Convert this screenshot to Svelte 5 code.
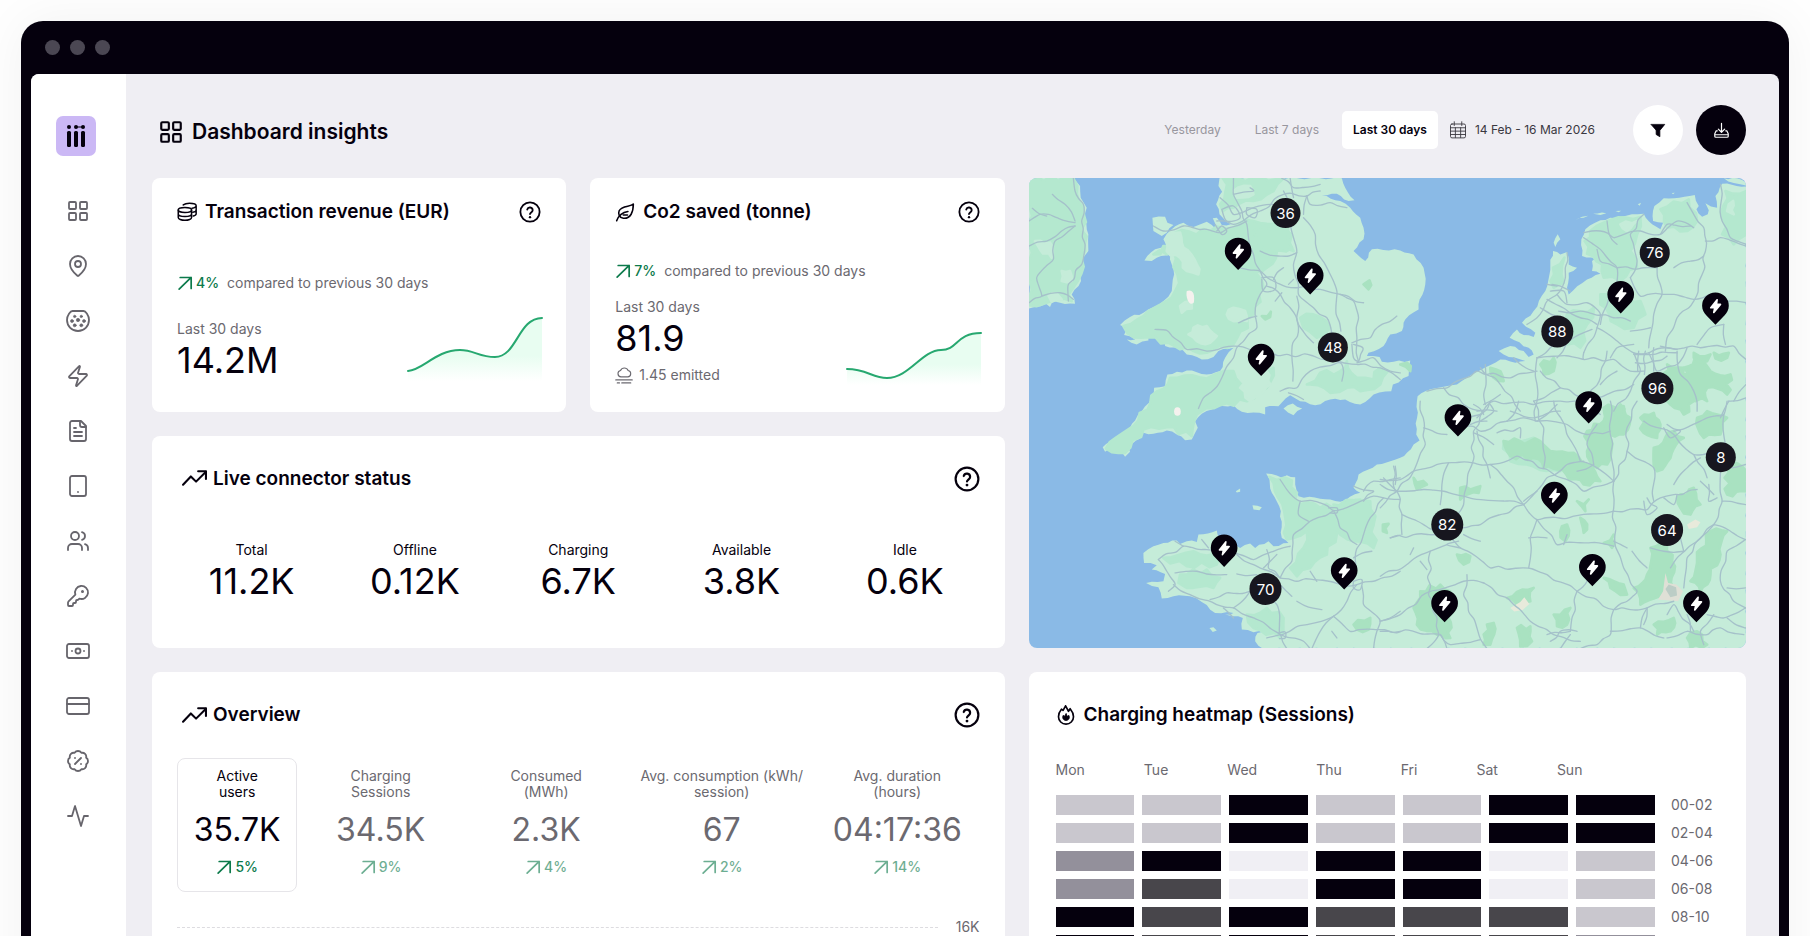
<script lang="ts">
  const nav = [
    { icon: 'grid', label: 'Dashboard' },
    { icon: 'pin', label: 'Locations' },
    { icon: 'connector', label: 'Connectors' },
    { icon: 'zap', label: 'Sessions' },
    { icon: 'file', label: 'Reports' },
    { icon: 'device', label: 'Devices' },
    { icon: 'users', label: 'Users' },
    { icon: 'key', label: 'Access' },
    { icon: 'banknote', label: 'Payouts' },
    { icon: 'card', label: 'Payments' },
    { icon: 'discount', label: 'Discounts' },
    { icon: 'activity', label: 'Activity' }
  ];

  const icons: Record<string, string> = {
    grid: '<rect x="3" y="3" width="7" height="7" rx="1"/><rect x="14" y="3" width="7" height="7" rx="1"/><rect x="14" y="14" width="7" height="7" rx="1"/><rect x="3" y="14" width="7" height="7" rx="1"/>',
    pin: '<path d="M20 10c0 5-5.5 10.200-7.400 11.800a1 1 0 0 1-1.200 0C9.500 20.200 4 15 4 10a8 8 0 0 1 16 0"/><circle cx="12" cy="10" r="3"/>',
    connector:
      '<path d="M6.500 2h11c2 0 5.500 4.500 5.500 9a11 11 0 0 1-22 0C1 6.500 4.500 2 6.500 2z"/><g fill="currentColor" stroke-width="0.600"><circle cx="8.700" cy="7.400" r="1.200"/><circle cx="15.300" cy="7.400" r="1.200"/><circle cx="6" cy="12" r="1.500"/><circle cx="12" cy="11" r="1.700"/><circle cx="18" cy="12" r="1.500"/><circle cx="8.700" cy="16.300" r="1.500"/><circle cx="15.300" cy="16.300" r="1.500"/></g>',
    zap: '<path d="M4 14a1 1 0 0 1-.78-1.63l9.900-10.200a.5.5 0 0 1 .86.46l-1.920 6.020A1 1 0 0 0 13 10h7a1 1 0 0 1 .78 1.630l-9.900 10.200a.5.5 0 0 1-.86-.46l1.920-6.020A1 1 0 0 0 11 14z"/>',
    file: '<path d="M15 2H6a2 2 0 0 0-2 2v16a2 2 0 0 0 2 2h12a2 2 0 0 0 2-2V7z"/><path d="M14 2v4a2 2 0 0 0 2 2h4M10 9H8M16 13H8M16 17H8"/>',
    device: '<rect x="4" y="2" width="16" height="20" rx="2"/><path d="M12 18h.01"/>',
    users:
      '<path d="M16 21v-2a4 4 0 0 0-4-4H6a4 4 0 0 0-4 4v2"/><circle cx="9" cy="7" r="4"/><path d="M22 21v-2a4 4 0 0 0-3-3.870M16 3.130a4 4 0 0 1 0 7.750"/>',
    key: '<path d="M2.600 17.400A2 2 0 0 0 2 18.800V21a1 1 0 0 0 1 1h3a1 1 0 0 0 1-1v-1a1 1 0 0 1 1-1h1a1 1 0 0 0 1-1v-1a1 1 0 0 1 1-1h.17a2 2 0 0 0 1.410-.59l.81-.81a6.500 6.500 0 1 0-4-4z"/><circle cx="16.500" cy="7.500" r=".6" fill="currentColor"/>',
    banknote: '<rect x="1" y="5" width="22" height="14" rx="2"/><circle cx="12" cy="12" r="2.500"/><path d="M6 12h.01M18 12h.01"/>',
    card: '<rect x="1" y="4" width="22" height="16" rx="2"/><path d="M1 10h22"/>',
    discount:
      '<path d="M3.850 8.620a4 4 0 0 1 4.780-4.770 4 4 0 0 1 6.740 0 4 4 0 0 1 4.780 4.780 4 4 0 0 1 0 6.740 4 4 0 0 1-4.770 4.780 4 4 0 0 1-6.750 0 4 4 0 0 1-4.780-4.770 4 4 0 0 1 0-6.760z"/><path d="m15 9-6 6M9 9h.01M15 15h.01"/>',
    activity: '<path d="M22 12h-4l-3 10L9 2 6 12H2"/>',
    trending: '<path d="m1 18 7.500-8 5 5L23 5.500"/><path d="M15.500 5H23v7.500"/>',
    arrow: '<path d="M3 20 20 3.500M4.500 3.500H20V19"/>',
    help: '<circle cx="12" cy="12" r="10.500"/><path d="M9 9.300a3 3 0 0 1 5.900.8c0 2-2.900 2.700-2.900 4.200"/><path d="M12 17.600h.01" stroke-width="2.600"/>',
    coins:
      '<ellipse cx="9.500" cy="9.500" rx="8" ry="3"/><path d="M1.500 9.500v9c0 1.900 3.600 3.500 8 3.500s8-1.600 8-3.500v-9M1.500 14c0 1.900 3.600 3.300 8 3.300s8-1.400 8-3.300"/><path d="M7.500 3.500C9 2.300 12 1.500 15 1.500c4.500 0 8 1.300 8 3s-2 2.600-5 3M23 4.500v9.500c0 1.300-1.600 2.300-3.500 2.800M23 9.500c0 1.300-2 2.400-4 2.800"/>',
    leaf: '<path d="M22 2.500C19 6 8 4 5 10.500c-1.500 3.500 0 8.500 5 9 9 .8 12-8 12-17z"/><path d="M2 22.500C5 15 9 12.500 15.500 11.500M10 15.500h5"/>',
    cloud: '<path d="M8 14.500a4.300 4.300 0 0 1-.6-8.500A5.500 5.500 0 0 1 17.500 6a4.300 4.300 0 0 1-.5 8.500z"/><path d="M1 18.500h22M3 22.500h3M9 22.500h12"/>',
    flame:
      '<path d="M11.500 1 8.500 6.500 6.500 5C4 8 3 11 3 14a9 9 0 0 0 18 0c0-3.500-2-7-4-9.500l-2 3z"/><path d="M12 10.500 10.500 13.500l-2-1c-1.300 3.200.5 6 3.500 6s5-2.800 3.500-6l-2 1z" fill="currentColor" stroke-width="1"/>',
    calendar: '<rect x="2" y="4" width="20" height="18.500" rx="2"/><path d="M2 9h20M2 13.500h20M2 18h20M8.500 9v13M15.500 9v13M7 1v5M17 1v5"/>',
    filter: '<path d="M3 4.500h18l-6.500 8V21L9.500 18v-5.500z" fill="currentColor"/>',
    download: '<path d="M12 2v12M7.500 10l4.500 4.500 4.500-4.500M6 12.500H4.500l-2 4V20a1.500 1.500 0 0 0 1.500 1.500h16a1.500 1.500 0 0 0 1.500-1.500v-3.500l-2-4H18M3 18h18"/>'
  };

  const ranges = ['Yesterday', 'Last 7 days', 'Last 30 days'];
  let range = $state('Last 30 days');

  const connectors = [
    { label: 'Total', value: '11.2K' },
    { label: 'Offline', value: '0.12K' },
    { label: 'Charging', value: '6.7K' },
    { label: 'Available', value: '3.8K' },
    { label: 'Idle', value: '0.6K' }
  ];

  const overview = [
    { lines: ['Active', 'users'], value: '35.7K', change: '5%' },
    { lines: ['Charging', 'Sessions'], value: '34.5K', change: '9%' },
    { lines: ['Consumed', '(MWh)'], value: '2.3K', change: '4%' },
    { lines: ['Avg. consumption (kWh/', 'session)'], value: '67', change: '2%' },
    { lines: ['Avg. duration', '(hours)'], value: '04:17:36', change: '14%' }
  ];
  let metric = $state(0);

  const days = ['Mon', 'Tue', 'Wed', 'Thu', 'Fri', 'Sat', 'Sun'];
  // 0 = quiet, 4 = busiest
  const heat = [
    { slot: '00-02', levels: [1, 1, 4, 1, 1, 4, 4] },
    { slot: '02-04', levels: [1, 1, 4, 1, 1, 4, 4] },
    { slot: '04-06', levels: [2, 4, 0, 4, 4, 0, 1] },
    { slot: '06-08', levels: [2, 3, 0, 4, 4, 0, 1] },
    { slot: '08-10', levels: [4, 3, 4, 3, 3, 3, 1] },
    { slot: '', levels: [4, 3, 4, 3, 3, 3, 2] }
  ];

  const clusters = [
    { x: 796, y: 126, r: 45, n: 36 },
    { x: 938, y: 529, r: 45, n: 48 },
    { x: 1903, y: 245, r: 45, n: 76 },
    { x: 1611, y: 481, r: 48, n: 88 },
    { x: 1911, y: 651, r: 48, n: 96 },
    { x: 2101, y: 858, r: 45, n: 8 },
    { x: 1281, y: 1060, r: 48, n: 82 },
    { x: 1940, y: 1076, r: 48, n: 64 },
    { x: 736, y: 1253, r: 48, n: 70 }
  ];

  const stations = [
    [654, 240], [870, 313], [723, 558], [1801, 370], [2085, 404], [1705, 700], [1313, 739],
    [1602, 972], [1716, 1188], [1273, 1296], [2028, 1296], [612, 1130], [972, 1198]
  ];

  const land = [
    // Ireland
    '27,22 160,22 180,45 182,80 200,110 195,145 205,190 205,240 185,270 183,330 155,370 165,398 120,395 98,390 90,408 78,398 27,412',
    // Great Britain
    '598,22 595,45 606,62 588,100 598,130 632,160 605,162 590,140 578,142 588,175 560,152 520,168 490,155 455,175 430,205 440,225 405,235 373,268 395,270 410,260 450,250 455,280 462,310 455,360 430,390 370,425 330,438 300,462 325,470 312,492 345,505 320,505 350,520 385,508 385,495 400,488 420,495 435,490 435,525 475,530 500,550 545,565 580,558 595,540 640,530 615,560 600,600 560,610 500,598 442,610 435,645 402,650 395,680 365,720 345,748 330,770 300,800 270,812 248,828 255,842 285,828 302,838 315,857 330,842 325,828 360,802 370,785 400,788 440,778 470,790 495,807 515,805 533,770 525,750 545,728 590,705 640,702 665,722 735,730 735,708 775,705 810,672 840,690 885,702 930,685 975,685 1020,700 1060,670 1113,660 1118,640 1165,615 1170,568 1120,572 1085,572 1078,558 1040,555 1045,545 1090,525 1110,490 1145,480 1150,455 1155,445 1195,415 1198,385 1215,340 1210,290 1180,250 1140,238 1055,235 1035,270 1000,240 1030,205 1030,170 1020,140 990,110 960,90 905,72 950,68 985,90 1003,88 975,50 965,22',
    // Anglesey
    '397,140 435,137 442,155 460,162 440,185 425,195 400,180',
    // Isle of Wight
    '790,712 818,697 846,712 820,732',
    '697,1002 725,1008 718,1017 700,1015',
    '647,960 660,952 660,962 650,964',
    '568,1370 580,1368 590,1378 578,1382',
    // Wadden islands
    '1600,215 1612,190 1620,205 1605,228',
    '1664,148 1685,137 1704,134 1690,140',
    '1718,128 1758,127 1740,132',
    '1785,120 1802,119 1795,124',
    '1852,100 1862,95 1858,104',
    '1954,66 1963,65 1958,70',
    '2110,22 2150,22 2178,36 2178,44 2140,36',
    // continent
    '728,1432 705,1410 712,1385 735,1380 700,1383 665,1375 668,1340 640,1335 615,1330 640,1325 585,1325 545,1292 510,1275 460,1275 425,1282 415,1248 378,1235 430,1230 435,1208 395,1195 410,1182 372,1175 370,1145 400,1125 430,1115 470,1108 480,1118 500,1110 530,1112 535,1090 590,1078 600,1100 625,1110 660,1130 690,1117 705,1130 745,1110 760,1125 805,1115 785,1100 782,1020 755,965 748,925 738,907 785,920 800,912 825,918 825,940 835,975 900,983 960,992 1020,965 1000,950 1015,910 1070,880 1140,860 1160,845 1180,820 1198,808 1188,790 1192,675 1215,660 1310,640 1440,565 1485,575 1515,570 1450,550 1435,540 1470,525 1510,540 1525,558 1540,550 1525,530 1468,500 1490,475 1510,492 1540,498 1545,485 1505,455 1540,420 1575,360 1590,280 1598,240 1620,250 1640,243 1645,280 1670,290 1645,305 1640,350 1645,370 1700,325 1740,308 1715,300 1715,270 1725,262 1685,255 1683,205 1695,175 1740,148 1800,138 1870,128 1895,160 1920,175 1928,155 1898,150 1902,105 1930,82 2023,72 2035,105 2028,115 2045,137 2062,130 2065,118 2055,97 2090,110 2085,75 2105,38 2178,46 2178,1432'
  ];

  // upland tint
  const hills = [
    '27,22 160,22 172,45 190,110 195,240 173,330 145,370 155,390 27,402',
    '608,22 790,22 760,60 700,90 640,110 608,120 600,100 616,62',
    '570,180 700,150 780,150 815,190 820,240 770,240 740,290 700,300 730,350 700,430 640,520 560,545 520,540 445,515 385,498 322,486 310,465 370,435 465,360 472,310 460,240 400,250 450,225 465,185',
    '450,620 560,622 610,600 640,600 680,650 760,590 740,650 680,690 560,710 530,730 515,795 440,768 370,775 315,845 258,832 355,748 412,660',
    '700,180 800,160 815,230 760,240 720,225',
    '840,440 880,430 930,470 890,500 850,470',
    '860,640 900,605 960,600 980,570 1010,620 1060,625 1080,590 1103,600 1080,640 1020,660 980,650 930,665 870,640',
    '748,917 815,928 825,985 900,1010 960,1000 1020,985 1060,1060 1060,1130 1000,1110 960,1070 920,1150 870,1190 830,1215 810,1190 850,1130 860,1080 800,1105 792,1020',
    '940,1000 1050,990 1060,1060 1000,1110 960,1090',
    '430,1160 520,1140 600,1150 590,1180 500,1185',
    '480,1210 560,1195 600,1220 580,1250 500,1250 475,1235',
    '680,1330 740,1310 790,1340 780,1400 700,1370',
    '1693,210 1710,180 1750,155 1860,138 1850,190 1830,240 1850,290 1800,330 1750,320 1745,280 1700,248',
    '1920,115 2005,85 2030,150 2000,180 1940,170',
    '2115,60 2178,60 2178,190 2140,220 2105,190',
    '1740,370 1860,390 1875,430 1840,470 1790,460 1740,400',
    '1598,290 1632,260 1630,335 1600,350',
    '1640,430 1720,410 1700,460 1680,530 1640,520',
    '1450,810 1540,800 1560,850 1640,870 1620,900 1520,880 1470,870'
  ];

  // lighter patches lying on the uplands
  const clearings = [
    '440,200 480,185 490,230 530,280 535,310 500,300 480,260 440,240',
    '520,470 560,465 590,495 570,515 530,510 505,490',
    '620,430 640,410 675,420 680,450 640,450',
    '660,650 690,610 740,600 750,640 690,690',
    '125,300 150,300 155,330 125,330',
    '45,210 90,215 95,260 60,235',
    '86,375 110,368 125,385 95,392',
    '640,60 690,45 700,70 650,80',
    '480,405 515,390 515,412 485,425',
    '1800,160 1850,150 1820,180',
    '2125,100 2138,90 2140,130 2120,120'
  ];

  const forests = [
    '1450,810 1560,810 1590,840 1660,845 1700,880 1740,930 1690,940 1610,895 1570,890 1540,860 1470,855',
    '1700,780 1750,750 1770,800 1760,880 1730,890 1700,840',
    '1750,710 1810,705 1830,740 1810,790 1770,790 1750,750',
    '1860,740 1900,725 1920,760 1910,800 1870,785',
    '1900,830 1960,780 1990,800 1950,860 1910,900',
    '1990,590 2040,560 2070,600 2130,610 2120,670 2060,650 2060,690 2010,680',
    '1940,580 1990,590 2020,690 1990,730 1950,700 1930,640',
    '2020,545 2070,550 2060,570 2020,560',
    '2080,545 2125,545 2120,560 2085,562',
    '1560,580 1600,560 1600,600 1570,610',
    '2060,720 2120,740 2100,790 2050,800 2030,740',
    '2120,870 2178,900 2178,960 2120,970',
    '1970,980 2020,950 2040,1000 2010,1030 1980,1010',
    '1890,1130 1940,1120 1955,1170 1960,1250 1930,1280 1860,1300 1840,1250 1880,1210',
    '2070,1080 2120,1080 2100,1150 2070,1210 2040,1260 2010,1230 2030,1160',
    '1200,1260 1260,1240 1290,1260 1290,1400 1250,1390 1190,1360 1180,1310',
    '1490,1370 1530,1365 1535,1410 1500,1425',
    '1400,1360 1420,1355 1410,1420 1390,1420',
    '1460,1280 1540,1250 1530,1290 1490,1310',
    '1600,1330 1650,1310 1640,1360 1610,1365',
    '1750,1220 1810,1240 1820,1270 1770,1250',
    '1320,950 1380,945 1375,965 1320,985',
    '1180,920 1220,940 1190,955',
    '1310,1150 1350,1155 1330,1180',
    '1088,1060 1105,1058 1100,1085 1088,1080',
    '1000,1360 1050,1340 1045,1375 1010,1375',
    '1670,990 1690,1000 1705,985 1695,1020',
    '1620,1080 1640,1060 1635,1110',
    '1680,1040 1700,1075 1690,1085',
    '1750,1115 1780,1090 1775,1130',
    '1900,1360 1960,1340 1950,1380 1910,1390',
    '2000,1400 2030,1380 2060,1420 2010,1430',
    '1140,580 1160,575 1170,600',
    '1770,720 1800,700 1810,730 1790,750',
    '1410,590 1440,600 1450,630 1420,620',
    '1030,340 1048,328 1045,355',
    '725,435 752,422 735,445'
  ];

  const roads = [
    {
      dx: 0,
      dy: 0,
      lines: [
        '160,22 165,60 190,100 185,150 195,220 185,280 145,340 145,390', '97,70 135,100 165,150', '27,150 60,130 110,140 165,155',
        '37,112 80,135', '27,225 80,210 125,180 165,165', '165,165 105,210 100,265 50,320 65,375 27,395', '65,375 120,365 160,385',
        '640,22 640,70 665,120 680,160 685,200 700,250 720,300 740,340 720,370 705,430 710,470 650,530 640,560 605,620 570,665 550,680 535,712',
        '590,150 640,160 720,120 790,70 860,75 900,60', '600,80 640,130 700,110 760,100',
        '790,60 815,140 820,200 830,240 820,280 835,370 880,410 920,440 935,490', '850,140 885,190 895,250 925,300 950,360 948,430 962,480',
        '830,375 835,470 815,540 818,630', '655,290 720,300 770,335 830,350 900,355 960,370 1000,390 1015,440 1010,500 1015,570',
        '740,345 780,370 810,410 835,460 880,515', '720,240 780,255 830,245', '790,290 760,325', '785,365 765,390',
        '405,475 440,478 500,535 560,540 640,525 720,545 800,550 880,555 950,570 1010,580 1080,590 1140,625',
        '400,165 430,180 490,165 560,175 600,185 680,150', '860,75 870,100 930,95 980,110', '995,515 1050,500 1085,460 1130,435',
        '780,660 830,650 870,600 960,575 970,600 965,630', '1010,575 1060,560 1110,600 1140,605', '655,455 690,440 710,435',
        '805,665 850,685', '960,370 1030,395', '1000,520 1028,530 1015,570 1000,560 995,520', '725,320 760,320 765,355 730,360 725,325',
        '605,115 640,105 660,140 620,150 605,115', '680,110 710,115 705,140 680,130 680,110', '590,180 605,165 620,180 605,190 585,160',
        '640,70 700,60 690,50', '785,22 820,50 900,40', '810,22 820,80', '860,75 850,130', '805,340 820,325'
      ]
    },
    {
      dx: 1140,
      dy: 0,
      lines: [
        '500,245 495,290 485,350 470,370 440,390 410,440 380,460', '470,345 440,340', '470,370 500,400 560,395 600,430 590,470 550,545',
        '550,185 600,180 640,200 720,180 780,190 830,150 880,170', '730,130 690,190 710,270 690,320', '550,200 600,235 650,290 650,330 620,400 600,460',
        '690,320 720,375 790,370 880,385 930,370 980,390 1037,395', '650,290 730,290 770,290', '770,290 785,370 760,430 745,530',
        '820,290 870,270 910,255', '860,95 880,130 910,170 915,240 905,310 880,390 830,440 800,500 795,540', '960,40 965,150 990,200 1037,220',
        '915,210 960,200 1037,225', '590,470 650,510 700,545 745,545 800,530 900,530 1000,525 1037,565', '475,420 540,420 640,440 690,450',
        '550,545 550,565 640,565 690,600 730,600', '410,560 470,555 550,565', '80,660 140,650 230,600 330,620 410,600', '130,650 190,700 250,720',
        '255,580 255,700', '410,560 410,640 405,750', '420,600 480,650 550,680 620,670 700,640', '240,590 300,640 360,720',
        '230,740 280,690 400,700 480,690 550,690 600,730', '700,545 720,600 690,660 640,720', '745,545 770,600 830,580 860,530',
        '830,540 840,610 880,660 890,720', '970,460 975,520', '970,460 930,470 890,520', '985,690 1037,680', '985,690 960,740',
        '500,480 450,530 410,560', '620,540 600,620 560,680', '575,475 520,500 470,560', '650,290 600,270 590,235', '620,150 625,185 650,220',
        '700,550 760,550 830,545', '705,575 760,570 800,555', '715,540 712,600', '735,540 732,610', '760,530 760,600', '780,525 800,530 830,535',
        '450,360 490,360 500,395', '455,340 480,345 510,360', '440,385 540,440 590,460', '420,410 480,440', '330,720 400,740 480,720',
        '250,700 300,670', '230,720 290,720', '250,730 220,700', '400,600 340,560', '480,650 400,690', '670,360 640,340', '780,190 800,160 870,165',
        '630,560 650,530 700,520', '690,480 750,470', '600,640 650,600', '1000,690 1037,640'
      ]
    },
    {
      dx: 0,
      dy: 720,
      lines: [
        '780,205 800,235 840,270 900,275 940,298 1000,280 1060,255 1100,262 1140,265', '1090,260 1050,320 1030,370 1005,440 1000,500',
        '940,298 960,350 1010,400', '940,298 870,330 820,370 815,450 780,500', '840,270 835,310 865,330', '415,445 490,405 560,415 640,425 700,445 810,405',
        '490,405 465,390', '650,430 700,460 780,500', '740,415 745,470 780,500 830,510 880,505 960,520 1010,520 1060,510 1140,480',
        '415,445 440,480 465,520 445,540', '465,485 530,480 620,490', '650,488 710,490', '460,520 510,550 570,570 640,590 700,620 780,670 800,712',
        '570,565 620,545 690,540', '690,540 640,590', '700,540 770,580 780,670 860,640 940,615 980,570 1010,520',
        '1025,525 1030,580 1080,630 1070,660 1060,712', '940,615 990,660 1070,655 1140,660', '1080,630 1140,600', '780,670 740,680',
        '780,670 850,690 870,712', '830,570 905,595', '940,615 900,660 875,712', '1030,240 1060,210 1140,200', '1120,165 1125,240',
        '1055,420 1000,440', '1000,510 1025,505 1020,535 1000,530 1000,510', '925,290 950,290 950,305 930,305', '1000,225 1060,240 1030,270',
        '1110,380 1140,372', '545,385 565,410', '730,470 770,430', '780,520 815,555', '610,590 640,620', '1090,200 1130,240', '870,480 890,510',
        '935,660 950,680', '775,665 795,662 795,680 778,682'
      ]
    },
    {
      dx: 1080,
      dy: 690,
      lines: [
        '0,235 60,235 100,210 200,185 330,190 410,165 500,205 560,235 610,270 700,240', '120,0 135,130 100,210 50,270 0,320',
        '50,270 130,265 250,285 400,300 430,310', '50,270 65,340 65,400', '205,185 185,250 180,310', '330,0 280,90 275,190 260,250 250,310 220,350',
        '230,380 300,370 360,340 430,310 500,230 560,190 610,180', '430,310 470,355 580,345 700,330', '330,190 380,240 430,310',
        '290,90 320,190 330,230', '470,355 450,410 445,500', '470,355 530,430 620,425 700,435', '200,400 240,440 330,500 430,500 500,520 590,570 700,625 800,620 880,600',
        '0,525 80,490 150,450 200,430', '65,340 130,370 170,390', '0,660 60,640 150,570 250,540 310,545', '260,520 250,580 290,680 320,742',
        '150,450 145,580 170,650 175,700 140,742', '310,545 400,610 450,660 520,700 600,720', '590,570 575,650 570,690', '570,690 500,700',
        '0,690 100,690 180,700 210,730 300,715', '700,240 700,320 705,435 730,500 770,570 740,600 700,625', '460,0 490,80 490,200',
        '470,60 560,70 620,100 690,90', '520,0 560,100 600,180', '690,0 690,100 700,240', '770,0 740,80 740,150 700,240',
        '650,70 620,130 640,190', '700,330 800,325 840,290 880,280 950,265', '740,150 820,200 820,300', '790,60 880,100 940,160 1020,160',
        '1020,215 1025,300 1000,370 960,410 920,470 910,560', '1000,370 950,420 890,470 870,500', '1000,370 1050,390 1095,415', '1025,300 1095,310',
        '880,90 960,60 1030,40 1040,0', '1030,40 1035,130', '1095,415 1040,450 1020,540 1060,600 1095,620', '700,625 690,700 650,730 600,742',
        '690,690 780,680 850,710', '800,620 790,670', '860,710 920,690 980,700 1020,680 1090,700', '920,640 930,690', '1095,620 1030,650 980,640',
        '130,80 200,100', '230,60 300,90 380,60', '280,95 340,130', '45,195 45,250', '0,250 50,270', '30,410 100,400 170,400', '250,400 300,420',
        '235,420 200,430 240,440', '430,300 470,270', '445,410 500,410', '550,430 560,400', '700,420 740,440', '640,500 620,540 590,570',
        '755,450 800,500', '810,440 850,450 910,450', '900,410 910,450', '1000,640 960,690 970,730', '860,640 880,610 940,690', '1040,560 1095,560',
        '985,250 985,300 1010,290', '960,240 1000,280', '800,290 830,320 800,340 790,300', '850,290 880,310 890,280', '860,70 900,90 870,110 850,80',
        '510,720 540,690 590,690', '540,742 570,700', '100,440 90,460', '120,480 140,505', '180,700 200,742', '530,10 500,40 470,60', '380,60 430,50 470,60',
        '300,60 340,30 330,10', '300,40 260,50 230,60', '270,70 320,60', '600,180 650,200 700,240', '640,190 590,210', '960,170 920,200 880,250',
        '940,160 980,230', '1030,200 1095,190', '780,680 800,620', '1040,650 1095,680', '350,95 420,80 420,110', '415,0 400,40 380,60'
      ]
    }
  ];

  // Breaks long straight runs into short uneven ones. `amount` is the largest sideways step,
  // always the same for the same coordinates.
  function roughen(points: string, amount: number, step: number, closed = false) {
    const pts = points.split(' ').map((p) => p.split(',').map(Number));
    if (closed) pts.push(pts[0]);
    const out: number[][] = [];
    for (let i = 0; i < pts.length - 1; i++) {
      const [x1, y1] = pts[i];
      const [x2, y2] = pts[i + 1];
      const length = Math.hypot(x2 - x1, y2 - y1);
      const parts = Math.max(1, Math.round(length / step));
      out.push([x1, y1]);
      for (let k = 1; k < parts; k++) {
        const t = k / parts;
        const x = x1 + (x2 - x1) * t;
        const y = y1 + (y2 - y1) * t;
        const side = Math.sin(x * 12.9 + y * 78.2) * amount;
        out.push([x - ((y2 - y1) / length) * side, y + ((x2 - x1) / length) * side]);
      }
    }
    out.push(pts[pts.length - 1]);
    return out;
  }

  function outline(points: string, amount: number, step: number) {
    return 'M' + roughen(points, amount, step, true).map(([x, y]) => `${x.toFixed(1)} ${y.toFixed(1)}`).join('L') + 'Z';
  }

  function curve(points: string) {
    const p = roughen(points, 5, 28);
    let d = `M${p[0][0]} ${p[0][1]}`;
    for (let i = 0; i < p.length - 1; i++) {
      const a = p[i - 1] ?? p[i];
      const b = p[i];
      const c = p[i + 1];
      const e = p[i + 2] ?? c;
      const n = [b[0] + (c[0] - a[0]) / 6, b[1] + (c[1] - a[1]) / 6, c[0] - (e[0] - b[0]) / 6, c[1] - (e[1] - b[1]) / 6, c[0], c[1]];
      d += 'C' + n.map((v) => v.toFixed(1)).join(' ');
    }
    return d;
  }
</script>

{#snippet icon(name: string, size: number, weight: number)}
  <svg
    class="icon"
    width={size}
    height={size}
    viewBox="0 0 24 24"
    fill="none"
    stroke="currentColor"
    stroke-width={weight}
    stroke-linecap="round"
    stroke-linejoin="round"
    aria-hidden="true"
  >
    {@html icons[name]}
  </svg>
{/snippet}

{#snippet trend(value: string)}
  <span class="trend">{@render icon('arrow', 17, 2.4)}{value}</span>
{/snippet}

<div class="stage">
  <div class="frame">
    <div class="titlebar"><i></i><i></i><i></i></div>

    <div class="screen">
      <aside class="sidebar">
        <a class="logo" href="#home" aria-label="Home">
          <svg width="20" height="24" viewBox="0 0 20 24" aria-hidden="true">
            <g fill="#05000d">
              <circle cx="3" cy="3" r="2" />
              <circle cx="10" cy="3" r="2" />
              <circle cx="17" cy="3" r="2" />
              <rect x="1" y="7" width="4" height="16" rx="1.500" />
              <rect x="8" y="7" width="4" height="16" rx="1.500" />
              <rect x="15" y="7" width="4" height="16" rx="1.500" />
              <rect x="10" y="2.500" width="7" height="1" />
            </g>
          </svg>
        </a>
        <nav>
          {#each nav as item}
            <a href="#{item.icon}" aria-label={item.label}>{@render icon(item.icon, 24, 1.8)}</a>
          {/each}
        </nav>
      </aside>

      <main>
        <header class="topbar">
          <h1>{@render icon('grid', 26, 2)}Dashboard insights</h1>
          <div class="ranges">
            {#each ranges as r}
              <button class:active={range === r} onclick={() => (range = r)}>{r}</button>
            {/each}
          </div>
          <button class="dates">{@render icon('calendar', 18, 1.2)}14 Feb - 16 Mar 2026</button>
          <button class="round" aria-label="Filter">{@render icon('filter', 18, 1)}</button>
          <button class="round dark" aria-label="Download">{@render icon('download', 17, 1.7)}</button>
        </header>

        <div class="cards">
          <section class="card kpi">
            <div class="card-head">
              <h2>{@render icon('coins', 20, 1.8)}Transaction revenue (EUR)</h2>
              <button class="help" aria-label="About transaction revenue">{@render icon('help', 22, 2)}</button>
            </div>
            <p class="compare">{@render trend('4%')}<span>compared to previous 30 days</span></p>
            <div class="figures">
              <div>
                <p class="muted">Last 30 days</p>
                <p class="value">14.2M</p>
              </div>
              <svg class="spark" width="136" height="65" viewBox="0 0 136 65" aria-hidden="true">
                <defs>
                  <linearGradient id="fade" x1="0" y1="0" x2="0" y2="1">
                    <stop offset="0.600" stop-color="#e8fdf1" />
                    <stop offset="1" stop-color="#ffffff" />
                  </linearGradient>
                </defs>
                <path d="M1 55C16 54 29 34 53 34C67 34 72 41 88 41C110 41 111 2 135 2V65H1Z" fill="url(#fade)" />
                <path class="line" d="M1 55C16 54 29 34 53 34C67 34 72 41 88 41C110 41 111 2 135 2" />
              </svg>
            </div>
          </section>

          <section class="card kpi tight">
            <div class="card-head">
              <h2>{@render icon('leaf', 20, 1.9)}Co2 saved (tonne)</h2>
              <button class="help" aria-label="About CO2 saved">{@render icon('help', 22, 2)}</button>
            </div>
            <p class="compare">{@render trend('7%')}<span>compared to previous 30 days</span></p>
            <div class="figures">
              <div>
                <p class="muted">Last 30 days</p>
                <p class="value">81.9</p>
                <p class="muted emitted">{@render icon('cloud', 18, 1.5)}1.45 emitted</p>
              </div>
              <svg class="spark" width="136" height="54" viewBox="0 0 136 54" aria-hidden="true">
                <path d="M1 38C21 38 26 47 41 47C63 47 76 19 95 19C112 19 110 2 135 2V54H1Z" fill="url(#fade)" />
                <path class="line" d="M1 38C21 38 26 47 41 47C63 47 76 19 95 19C112 19 110 2 135 2" />
              </svg>
            </div>
          </section>

          <section class="map" aria-label="Charging locations">
            <svg viewBox="27 21 2151 1410" preserveAspectRatio="xMidYMid slice">
              <rect x="27" y="21" width="2151" height="1410" fill="#8abae6" />
              {#each land as points}
                <path d={outline(points, 3, 16)} fill="#c5ecd9" />
              {/each}
              {#each hills as points}
                <path class="patch" d={outline(points, 9, 22)} fill="#b4e8cf" stroke="#b4e8cf" />
              {/each}
              {#each clearings as points}
                <path class="patch" d={outline(points, 6, 16)} fill="#c5ecd9" stroke="#c5ecd9" />
              {/each}
              {#each forests as points}
                <path class="patch" d={outline(points, 8, 16)} fill="#a9e2c1" stroke="#a9e2c1" />
              {/each}
              <g fill="#f5f1ee">
                <path d="M500 360c14-6 22 4 22 20s0 16-8 18-18-20-14-38z" />
                <ellipse cx="472" cy="721" rx="10" ry="13" />
                <path d="M2000 1060l25-15 15 8-10 15-25 5z" fill="#e8eadb" />
                <path d="M1935 1205l8 30 25 5 20 20-15 30-60-5 15-25z" fill="#dfe0d6" />
                <path d="M1945 1240l22 8 3 25-20 5-15-25z" fill="#bccdc6" />
                <path d="M1470 1310l30-18 12-14 15 20-20 18-25 5z" fill="#e8eadb" />
              </g>
              {#each roads as region}
                <g class="roads" transform="translate({region.dx} {region.dy})">
                  {#each region.lines as points}
                    <path d={curve(points)} />
                  {/each}
                </g>
              {/each}
              {#each clusters as c}
                <g transform="translate({c.x} {c.y})">
                  <circle r={c.r} fill="#17161f" />
                  <text class="count" text-anchor="middle" y="17">{c.n}</text>
                </g>
              {/each}
              {#each stations as [x, y]}
                <g transform="translate({x} {y})">
                  <path d="M-40 0a40 40 0 1 1 80 0c0 13-6 22-13 29L0 57-27 29c-7-7-13-16-13-29z" fill="#05000d" />
                  <path
                    d="M5-18L-14 6H-2L-5 20L15-4H3z"
                    fill="#fff"
                    stroke="#fff"
                    stroke-width="5"
                    stroke-linejoin="round"
                  />
                </g>
              {/each}
            </svg>
          </section>

          <section class="card wide live">
            <div class="card-head">
              <h2>{@render icon('trending', 25, 2)}Live connector status</h2>
              <button class="help" aria-label="About connector status">{@render icon('help', 26, 2)}</button>
            </div>
            <dl>
              {#each connectors as c}
                <div>
                  <dt>{c.label}</dt>
                  <dd class="value">{c.value}</dd>
                </div>
              {/each}
            </dl>
          </section>

          <section class="card wide">
            <div class="card-head">
              <h2>{@render icon('trending', 25, 2)}Overview</h2>
              <button class="help" aria-label="About the overview">{@render icon('help', 26, 2)}</button>
            </div>
            <div class="metrics">
              {#each overview as m, i}
                <button class="metric" class:selected={metric === i} aria-pressed={metric === i} onclick={() => (metric = i)}>
                  <span class="name">{m.lines[0]}<br />{m.lines[1]}</span>
                  <span class="number">{m.value}</span>
                  {@render trend(m.change)}
                </button>
              {/each}
            </div>
            <div class="axis"><i></i><span>16K</span></div>
          </section>

          <section class="card heatmap">
            <div class="card-head">
              <h2>{@render icon('flame', 20, 2)}Charging heatmap (Sessions)</h2>
            </div>
            <table>
              <thead>
                <tr>
                  {#each days as day}
                    <th scope="col">{day}</th>
                  {/each}
                </tr>
              </thead>
              <tbody>
                {#each heat as row}
                  <tr>
                    {#each row.levels as level}
                      <td class="level-{level}"></td>
                    {/each}
                    <th scope="row">{row.slot}</th>
                  </tr>
                {/each}
              </tbody>
            </table>
          </section>
        </div>
      </main>
    </div>
  </div>
</div>

<style>
  :global(body) {
    margin: 0;
    background: #fefefe;
  }

  .stage {
    --ink: #05000d;
    --muted: #6b6970;
    --green: #0c7a4b;
    --ground: #efeef3;
    box-sizing: border-box;
    height: 100vh;
    overflow: hidden;
    padding: 21px 21px 0;
    font-family: Inter, 'Liberation Sans', sans-serif;
    font-size: 14px;
    line-height: 20px;
    color: var(--ink);
  }

  .stage :global(*) {
    box-sizing: border-box;
  }

  h1,
  h2,
  p,
  dl,
  dd {
    margin: 0;
  }

  button {
    border: 0;
    padding: 0;
    background: none;
    font: inherit;
    color: inherit;
    cursor: pointer;
  }

  .icon {
    flex: none;
    display: block;
  }

  .frame {
    min-height: 100%;
    padding: 0 10px;
    border-radius: 22px 22px 0 0;
    background: var(--ink);
    box-shadow: 0 0 50px rgba(0, 0, 0, 0.05);
  }

  .titlebar {
    display: flex;
    gap: 10px;
    height: 53px;
    padding: 19px 14px 0;
  }

  .titlebar i {
    width: 15px;
    height: 15px;
    border-radius: 50%;
    background: #4b4753;
  }

  .screen {
    display: flex;
    border-radius: 8px 8px 0 0;
    overflow: hidden;
    background: var(--ground);
  }

  .sidebar {
    flex: none;
    display: flex;
    flex-direction: column;
    align-items: center;
    width: 95px;
    padding: 42px 2px 0 0;
    background: #fff;
  }

  .logo {
    display: flex;
    align-items: center;
    justify-content: center;
    width: 40px;
    height: 40px;
    margin-right: 4px;
    border-radius: 7px;
    background: #cbb8f5;
  }

  nav {
    display: flex;
    flex-direction: column;
    gap: 31px;
    margin-top: 43px;
  }

  nav a {
    color: #67656c;
  }

  main {
    flex: 1;
    min-width: 0;
    padding: 31px 33px 40px 26px;
  }

  .topbar {
    display: flex;
    align-items: center;
    height: 50px;
    margin-bottom: 23px;
    font-size: 12px;
  }

  h1 {
    display: flex;
    align-items: center;
    gap: 8px;
    margin-right: auto;
    padding: 3px 0 0 6px;
    font-size: 21px;
    font-weight: 600;
    line-height: 26px;
  }

  .ranges {
    display: flex;
  }

  .ranges button {
    padding: 9px 11px;
    border-radius: 5px;
    margin-left: 12px;
    color: #98969e;
  }

  .ranges button.active {
    background: #fff;
    color: var(--ink);
    font-weight: 600;
  }

  .dates {
    display: flex;
    align-items: center;
    gap: 8px;
    margin: 0 38px 0 11px;
    color: #3a383f;
  }

  .round {
    display: flex;
    align-items: center;
    justify-content: center;
    width: 50px;
    height: 50px;
    border-radius: 50%;
    background: #fff;
  }

  .round.dark {
    margin-left: 13px;
    background: var(--ink);
    color: #fff;
  }

  .cards {
    display: grid;
    grid-template-columns: 414fr 414fr 717fr;
    gap: 24px;
  }

  .card {
    min-width: 0;
    padding: 29px 25px 24px;
    border-radius: 8px;
    background: #fff;
  }

  .card-head {
    display: flex;
    align-items: center;
    justify-content: space-between;
    height: 28px;
  }

  h2 {
    display: flex;
    align-items: center;
    gap: 8px;
    font-size: 19px;
    font-weight: 600;
    line-height: 24px;
  }

  .kpi {
    padding: 20px 23px 30px 25px;
  }

  .kpi .card-head {
    padding-right: 2px;
  }

  .compare {
    display: flex;
    gap: 8px;
    margin-top: 47px;
    color: var(--muted);
  }

  .tight .compare {
    margin-top: 35px;
  }

  .trend {
    display: flex;
    align-items: center;
    gap: 2px;
    color: var(--green);
    font-weight: 500;
  }

  .figures {
    display: flex;
    align-items: flex-end;
    justify-content: space-between;
    margin-top: 23px;
  }

  .tight .figures {
    margin-top: 16px;
  }

  .tight {
    padding-bottom: 24px;
  }

  .muted {
    color: var(--muted);
  }

  .value {
    font-size: 36px;
    line-height: 42px;
  }

  .emitted {
    display: flex;
    align-items: center;
    gap: 6px;
    margin-top: 6px;
  }

  .spark .line {
    fill: none;
    stroke: #27a870;
    stroke-width: 2;
    stroke-linecap: round;
  }

  .map {
    grid-column: 3;
    grid-row: 1 / span 2;
    border-radius: 8px;
    overflow: hidden;
  }

  .map svg {
    display: block;
    width: 100%;
    height: 100%;
  }

  .patch {
    stroke-width: 8;
    stroke-linejoin: round;
  }

  .roads {
    fill: none;
    stroke: #a5c1ca;
    stroke-width: 4;
    stroke-linejoin: round;
    stroke-linecap: round;
  }

  .count {
    font-size: 45px;
    fill: #fff;
  }

  .wide {
    grid-column: 1 / span 2;
  }

  .wide h2 {
    gap: 6px;
    padding-left: 5px;
  }

  .live {
    padding-bottom: 46px;
  }

  dl {
    display: grid;
    grid-template-columns: repeat(5, 1fr);
    margin: 47px -7px 0;
    text-align: center;
  }

  .metrics {
    display: grid;
    grid-template-columns: 120fr 166fr 164fr 186fr 164fr;
    margin-top: 29px;
  }

  .metric {
    display: flex;
    flex-direction: column;
    align-items: center;
    padding: 9px 0 14px;
    border: 1px solid transparent;
    border-radius: 8px;
    color: var(--muted);
  }

  .metric.selected {
    border-color: #e6e5e9;
    color: var(--ink);
  }

  .name {
    line-height: 16px;
  }

  .number {
    margin: 12px 0 9px;
    font-size: 32px;
    line-height: 36px;
  }

  .metric .trend {
    opacity: 0.6;
  }

  .metric.selected .trend {
    opacity: 1;
  }

  .axis {
    display: flex;
    align-items: center;
    gap: 18px;
    margin-top: 25px;
    color: var(--muted);
  }

  .axis i {
    flex: 1;
    border-top: 1px dashed #dddce0;
  }

  .heatmap {
    padding: 29px 25px 24px 27px;
  }

  table {
    display: block;
    margin-top: 31px;
    color: var(--muted);
  }

  thead,
  tbody {
    display: block;
  }

  th {
    padding: 0;
    font-weight: 400;
    text-align: left;
  }

  thead tr {
    display: flex;
    gap: 59px;
    margin-bottom: 15px;
  }

  tbody tr {
    display: grid;
    grid-template-columns: repeat(7, 1fr) 58px;
    gap: 8px;
    height: 20px;
    margin-bottom: 8px;
  }

  tbody th {
    padding-left: 8px;
  }

  td {
    padding: 0;
  }

  .level-0 {
    background: #f0eff4;
  }

  .level-1 {
    background: #c9c7ce;
  }

  .level-2 {
    background: #93909b;
  }

  .level-3 {
    background: #48464b;
  }

  .level-4 {
    background: var(--ink);
  }
</style>
